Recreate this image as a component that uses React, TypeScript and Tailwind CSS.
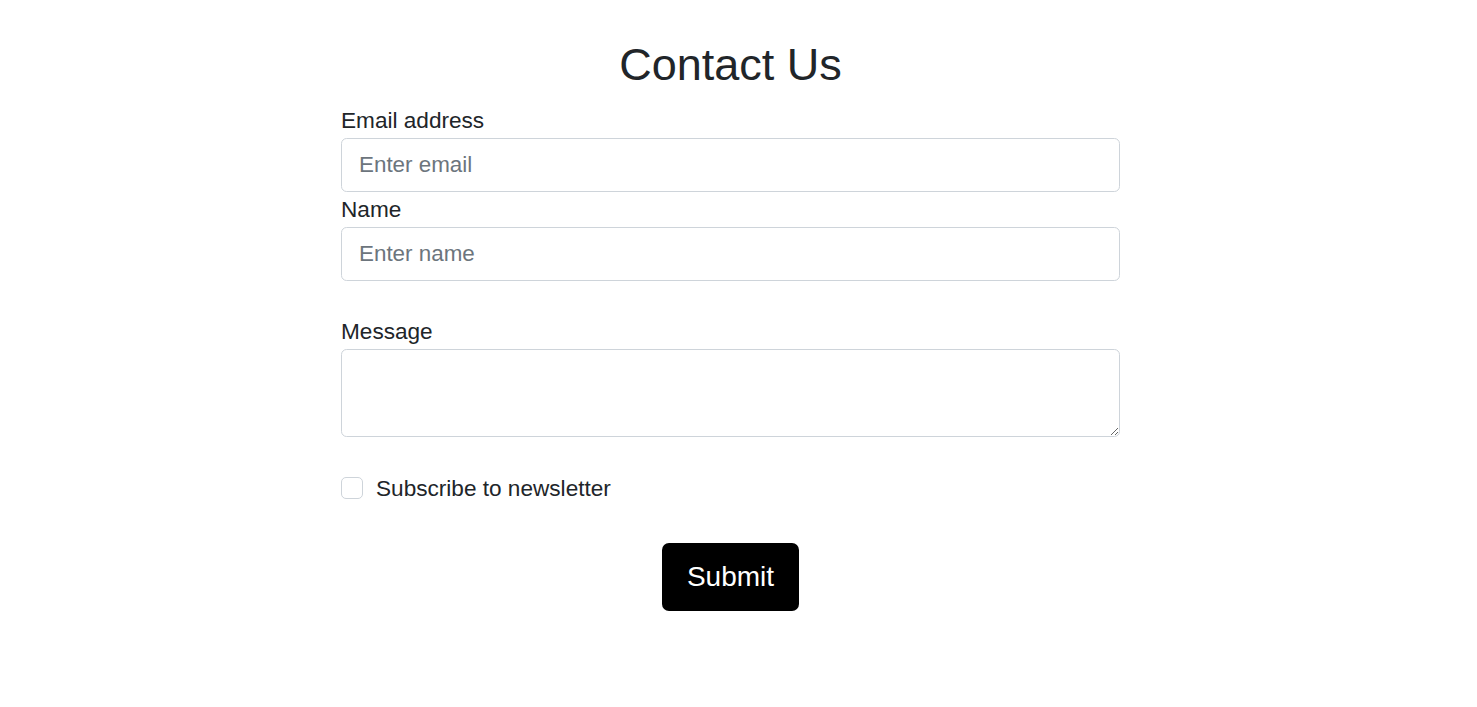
import React, { useState } from 'react';

export default function App() {
    const [form, setForm] = useState({ email: '', name: '', message: '', subscribe: false });

    const handleChange = (e: React.ChangeEvent<HTMLInputElement | HTMLTextAreaElement>) => {
        const { name, value } = e.target;
        setForm(prev => ({ ...prev, [name]: value }));
    };

    const inputClass =
        "block w-full h-[54px] border border-[#ced4da] rounded-[5.6px] px-[17px] text-[22.4px] text-[#212529] placeholder:text-[#6c757d] outline-none";

    return (
        <div className="min-h-screen bg-white text-[#212529] font-['Liberation_Sans',Arial,sans-serif] flex justify-center pr-[16px]">
            <form
                className="w-[779px] flex flex-col"
                onSubmit={(e) => e.preventDefault()}
            >
                <h1 className="mt-[38px] mb-[12px] text-center text-[45px] leading-[1.2] font-normal">
                    Contact Us
                </h1>

                <label className="text-[22.6px] leading-[1.5]">Email address</label>
                <input
                    type="email"
                    name="email"
                    value={form.email}
                    onChange={handleChange}
                    placeholder="Enter email"
                    className={inputClass}
                />

                <label className="mt-[1px] text-[22.6px] leading-[1.5]">Name</label>
                <input
                    type="text"
                    name="name"
                    value={form.name}
                    onChange={handleChange}
                    placeholder="Enter name"
                    className={inputClass}
                />

                <label className="mt-[34px] text-[22.6px] leading-[1.5]">Message</label>
                <textarea
                    name="message"
                    value={form.message}
                    onChange={handleChange}
                    className="block w-full h-[88px] border border-[#ced4da] rounded-[5.6px] px-[17px] py-[8px] text-[22.4px] outline-none resize-y"
                />

                <div className="mt-[35px] h-[33.6px] flex items-center">
                    <input
                        type="checkbox"
                        id="subscribe"
                        checked={form.subscribe}
                        onChange={(e) => setForm(prev => ({ ...prev, subscribe: e.target.checked }))}
                        className="appearance-none w-[22px] h-[22px] border border-[#ced4da] rounded-[5px] bg-white checked:bg-black"
                    />
                    <label htmlFor="subscribe" className="ml-[13px] text-[22.6px] leading-[1.5]">
                        Subscribe to newsletter
                    </label>
                </div>

                <div className="mt-[38px] flex justify-center">
                    <button
                        type="submit"
                        className="w-[137px] h-[68px] bg-black text-white rounded-[7px] text-[28px] leading-none"
                    >
                        Submit
                    </button>
                </div>
            </form>
        </div>
    );
}
